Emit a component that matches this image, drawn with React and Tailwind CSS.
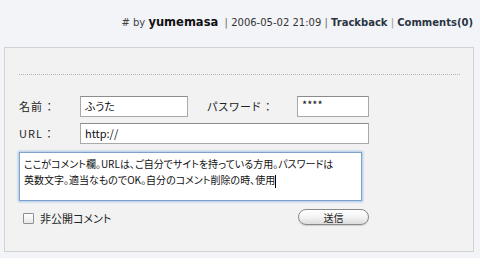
import React from 'react';

const jp = { fontFamily: '"Lucida Grande", "Noto Sans CJK JP", sans-serif' };

const App = () => {
  return (
    <div className="w-[480px] h-[258px] bg-[#f3f4f8] overflow-hidden" style={jp}>
      {/* Entry footer */}
      <div
        className="h-[47px] pt-[14px] pr-[7px] flex justify-end items-baseline text-[10px] text-[#333] whitespace-nowrap"
        style={{ fontFamily: '"DejaVu Sans", Verdana, sans-serif' }}
      >
        <span className="text-[#444]"># by&nbsp;</span>
        <span className="text-[11.5px] font-bold text-[#111]">yumemasa</span>
        <span className="text-[#666]">&nbsp;&nbsp;|&nbsp;</span>
        <span>2006-05-02 21:09</span>
        <span className="text-[#666]">&nbsp;|&nbsp;</span>
        <span className="font-bold text-[#2a3442]">Trackback</span>
        <span className="text-[#999]">&nbsp;|&nbsp;</span>
        <span className="font-bold text-[#2a3442]">Comments(0)</span>
      </div>

      {/* Comment form */}
      <div className="ml-[4px] w-[470px] h-[205px] bg-[#f2f2f2] border border-[#d2d2d2] pl-[14px] pr-[13px] pt-[26px] [font-feature-settings:'palt']">
        <div className="border-t border-dotted border-[#b5b5b5]" />

        <div className="mt-[21px] flex items-center h-[21px] text-[11px] text-[#222]">
          <span className="w-[61px] tracking-[1px]">名前 ：</span>
          <div className="w-[108px] h-[21px] bg-white border border-[#a9a9a9] border-t-[#8c8c8c] pl-[4px] flex items-center text-[11px] text-[#111]">
            ふうた
          </div>
          <span className="ml-[19px] w-[90px] tracking-[1px]">パスワード ：</span>
          <div className="w-[72px] h-[21px] bg-white border border-[#a9a9a9] border-t-[#8c8c8c] pl-[4px] text-[11px] text-[#111] leading-[14px]">
            ****
          </div>
        </div>

        <div className="mt-[6px] flex items-center h-[21px] text-[11px] text-[#222]">
          <span className="w-[61px] tracking-[1px]">URL ：</span>
          <div className="w-[289px] h-[21px] bg-white border border-[#a9a9a9] border-t-[#8c8c8c] pl-[4px] flex items-center text-[11px] text-[#111]">
            http://
          </div>
        </div>

        <div className="mt-[8px] w-[343px] h-[49px] bg-white border border-[#7ea2cc] shadow-[0_0_2px_1px_#a9c6e8] px-[4px] pt-[3px] text-[10px] leading-[16px] text-[#111] whitespace-nowrap overflow-hidden">
          ここがコメント欄。URLは、ご自分でサイトを持っている方用。パスワードは
          <br />
          英数文字。適当なものでOK。自分のコメント削除の時、使用
          <span className="inline-block w-px h-[13px] bg-black align-middle" />
        </div>

        <div className="mt-[7px] flex items-center justify-between w-[350px]">
          <div className="flex items-center pl-[4px] pt-[2px]">
            <span className="w-[11px] h-[11px] border border-[#8f8f8f] bg-gradient-to-b from-white to-[#e8e8e8] rounded-[1px]" />
            <span className="ml-[6px] text-[11px] text-[#222]">非公開コメント</span>
          </div>
          <div className="w-[71px] h-[16px] rounded-full border border-[#8a8a8a] bg-gradient-to-b from-white via-[#f4f4f4] to-[#dcdcdc] shadow-[0_1px_1px_rgba(0,0,0,0.15)] flex items-center justify-center text-[10px] text-[#222]">
            送信
          </div>
        </div>
      </div>
    </div>
  );
};

export default App;
